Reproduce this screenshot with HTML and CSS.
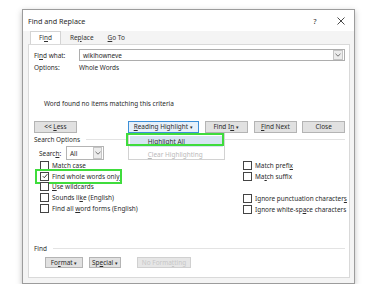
FILE: index.html
```html
<!DOCTYPE html>
<html lang="en">
<head>
    <meta charset="UTF-8">
    <meta name="viewport" content="width=device-width, initial-scale=1.0">
    <title>Find and Replace</title>
    <link rel="stylesheet" href="styles.css">
</head>
<body>
    <div class="dialog">
        <div class="titlebar">
            <span class="title">Find and Replace</span>
            <span class="help">?</span>
            <span class="close">
                <svg width="8" height="8" viewBox="0 0 8 8"><path d="M0.5 0.5L7.5 7.5M7.5 0.5L0.5 7.5" stroke="#333" stroke-width="0.9" fill="none"/></svg>
            </span>
        </div>

        <div class="tabs">
            <span class="tab active">Fi<u>n</u>d</span>
            <span class="tab">Re<u>p</u>lace</span>
            <span class="tab"><u>G</u>o To</span>
        </div>

        <div class="pane">
            <div class="field-row">
                <span class="field-label">Fi<u>n</u>d what:</span>
                <div class="combo">
                    <span class="combo-text">wikihowneve</span>
                    <span class="combo-btn">
                        <svg width="6" height="4" viewBox="0 0 6 4"><path d="M0.5 0.8L3 3.2L5.5 0.8" stroke="#555" stroke-width="0.8" fill="none"/></svg>
                    </span>
                </div>
            </div>
            <div class="options-row">
                <span class="field-label">Options:</span>
                <span>Whole Words</span>
            </div>

            <div class="message">Word found no items matching this criteria</div>

            <div class="button-row">
                <button class="btn btn-less">&lt;&lt; <u>L</u>ess</button>
                <div class="menu-wrap">
                    <button class="btn btn-reading"><u>R</u>eading Highlight <span class="caret">&#9662;</span></button>
                    <div class="menu">
                        <div class="menu-item selected"><u>H</u>ighlight All</div>
                        <div class="menu-item disabled"><u>C</u>lear Highlighting</div>
                    </div>
                    <div class="mark mark-menu"></div>
                </div>
                <button class="btn btn-findin">Find I<u>n</u> <span class="caret">&#9662;</span></button>
                <button class="btn btn-next"><u>F</u>ind Next</button>
                <button class="btn btn-close">Close</button>
            </div>

            <div class="group-head">
                <span>Search Options</span>
                <span class="rule"></span>
            </div>

            <div class="search-row">
                <span class="search-label">Searc<u>h</u>:</span>
                <div class="select">
                    <span class="select-text">All</span>
                    <span class="select-btn">
                        <svg width="6" height="4" viewBox="0 0 6 4"><path d="M0.5 0.8L3 3.2L5.5 0.8" stroke="#555" stroke-width="0.8" fill="none"/></svg>
                    </span>
                </div>
            </div>

            <div class="checks">
                <div class="check-col">
                    <div class="check"><span class="box"></span><span class="check-text">Matc<u>h</u> case</span></div>
                    <div class="check marked">
                        <span class="box">
                            <svg width="6" height="6" viewBox="0 0 6 6"><path d="M0.8 3.2L2.3 4.7L5.3 1.2" stroke="#222" stroke-width="0.9" fill="none"/></svg>
                        </span><span class="check-text">Find whole words onl<u>y</u></span>
                    </div>
                    <div class="check"><span class="box"></span><span class="check-text"><u>U</u>se wildcards</span></div>
                    <div class="check"><span class="box"></span><span class="check-text">Sounds li<u>k</u>e (English)</span></div>
                    <div class="check"><span class="box"></span><span class="check-text">Find all <u>w</u>ord forms (English)</span></div>
                </div>
                <div class="check-col">
                    <div class="check"><span class="box"></span><span class="check-text">Match prefi<u>x</u></span></div>
                    <div class="check"><span class="box"></span><span class="check-text">Ma<u>t</u>ch suffix</span></div>
                    <div class="check"></div>
                    <div class="check"><span class="box"></span><span class="check-text">Ignore punctuation character<u>s</u></span></div>
                    <div class="check"><span class="box"></span><span class="check-text">Ignore white-sp<u>a</u>ce characters</span></div>
                </div>
            </div>

            <div class="group-head find-head">
                <span>Find</span>
                <span class="rule"></span>
            </div>

            <div class="bottom-row">
                <button class="btn btn-format">Fo<u>r</u>mat <span class="caret">&#9662;</span></button>
                <button class="btn btn-special">Sp<u>e</u>cial <span class="caret">&#9662;</span></button>
                <button class="btn btn-noformat" disabled>No Forma<u>t</u>ting</button>
            </div>
        </div>
    </div>
</body>
</html>
```

FILE: styles.css
```css
body {
    margin: 0;
    padding: 0;
    background-color: #fff;
    font-family: "Noto Sans", "Open Sans", sans-serif;
    font-size: 6.45px;
    color: #2a2a2a;
}
u {
    text-decoration-thickness: 0.5px;
    text-underline-offset: 1px;
}
.dialog {
    width: 331px;
    height: 273px;
    margin: 9px 0 0 22px;
    border: 1px solid #9c9c9c;
    background-color: #f4f4f4;
    box-shadow: 0 2px 6px rgba(0, 0, 0, 0.25);
    display: flex;
    flex-direction: column;
}
.titlebar {
    height: 21px;
    display: flex;
    align-items: center;
    background-color: #fff;
    padding: 0 0 0 5px;
    font-size: 7.2px;
}
.title {
    flex: 1;
}
.help {
    width: 26px;
    text-align: center;
    font-size: 7.5px;
}
.close {
    width: 26px;
    display: flex;
    justify-content: center;
}
.tabs {
    height: 13px;
    display: flex;
    align-items: flex-end;
    padding-left: 7px;
}
.tab {
    height: 12px;
    line-height: 12px;
    padding: 0 7px;
    color: #333;
}
.tab.active {
    background-color: #fff;
    border: 1px solid #d4d4d4;
    border-bottom: none;
    padding: 0 8px;
    height: 12px;
    margin-right: 2px;
}
.pane {
    flex: 1;
    margin: 0 4px 5px 5px;
    background-color: #fff;
    border: 1px solid #d9d9d9;
    padding: 4px 4px 0 5px;
    display: flex;
    flex-direction: column;
}
.field-row {
    display: flex;
    align-items: center;
    height: 12px;
}
.field-label {
    width: 45px;
}
.combo {
    flex: 1;
    height: 12px;
    box-sizing: border-box;
    border: 1px solid #adadad;
    display: flex;
    align-items: center;
    padding-left: 3px;
}
.combo-text {
    flex: 1;
}
.combo-btn {
    width: 8px;
    height: 8px;
    margin-right: 1px;
    border: 1px solid #c5c5c5;
    background-color: #ececec;
    display: flex;
    align-items: center;
    justify-content: center;
}
.options-row {
    display: flex;
    align-items: center;
    height: 11px;
    margin-top: 1px;
}
.message {
    margin: 25px 0 0 10px;
    height: 11px;
    line-height: 11px;
}
.button-row {
    display: flex;
    margin-top: 12px;
    height: 12px;
}
.btn {
    font-family: inherit;
    font-size: 6.45px;
    color: #2a2a2a;
    height: 12px;
    padding: 0;
    background-color: #e1e1e1;
    border: 1px solid #b4b4b4;
    box-sizing: border-box;
    line-height: 10px;
    white-space: nowrap;
}
.caret {
    font-size: 5px;
}
.btn-less {
    width: 43px;
}
.menu-wrap {
    position: relative;
    margin-left: 51px;
}
.btn-reading {
    width: 71px;
    background-color: #e6f0fa;
    border-color: #3c8fd8;
}
.btn-findin {
    width: 43px;
    margin-left: 6px;
}
.btn-next {
    width: 44px;
    margin-left: 6px;
}
.btn-close {
    width: 43px;
    margin-left: 5px;
}
.menu {
    position: absolute;
    left: 0;
    top: 12px;
    width: 97px;
    height: 27px;
    box-sizing: border-box;
    background-color: #fff;
    border: 1px solid #d2d2d2;
    padding: 2px 1px;
    z-index: 2;
}
.menu-item {
    height: 11px;
    line-height: 11px;
    padding-left: 18px;
}
.menu-item.selected {
    background-color: #d6e4f2;
}
.menu-item.disabled {
    color: #b9b9b9;
    margin-top: 2px;
}
.mark {
    position: absolute;
    border: 2.5px solid #3fdc3c;
    z-index: 3;
}
.mark-menu {
    left: -2px;
    top: 12px;
    width: 94px;
    height: 9px;
}
.group-head {
    display: flex;
    align-items: center;
    height: 11px;
    margin-top: 1px;
}
.rule {
    flex: 1;
    height: 1px;
    background-color: #e3e3e3;
    margin-left: 6px;
}
.search-row {
    display: flex;
    align-items: center;
    height: 14px;
    margin: 1px 0 0 5px;
}
.search-label {
    width: 27px;
}
.select {
    width: 38px;
    height: 14px;
    box-sizing: border-box;
    border: 1px solid #b4b4b4;
    display: flex;
    align-items: center;
    padding-left: 3px;
}
.select-text {
    flex: 1;
}
.select-btn {
    width: 7px;
    height: 10px;
    margin-right: 1px;
    border: 1px solid #c5c5c5;
    background-color: #ececec;
    display: flex;
    align-items: center;
    justify-content: center;
}
.checks {
    display: grid;
    grid-template-columns: 203px 1fr;
    margin-top: 0;
    padding-left: 6px;
}
.check-col {
    display: flex;
    flex-direction: column;
}
.check {
    display: flex;
    align-items: center;
    height: 11px;
}
.check-text {
    white-space: nowrap;
}
.box {
    flex-shrink: 0;
    width: 7px;
    height: 7px;
    border: 1px solid #444;
    background-color: #fff;
    margin-right: 3px;
    display: flex;
    align-items: center;
    justify-content: center;
}
.check.marked {
    height: 8px;
    margin: -2.5px 0 -2.5px -5px;
    padding: 1.5px 0 1.5px 3px;
    border: 2.5px solid #3fdc3c;
    width: 80px;
}
.find-head {
    margin-top: 28px;
}
.bottom-row {
    display: flex;
    margin: 3px 0 0 11px;
}
.btn-format {
    width: 38px;
    height: 11px;
}
.btn-special {
    width: 32px;
    height: 11px;
    margin-left: 6px;
}
.btn-noformat {
    width: 54px;
    height: 11px;
    margin-left: 16px;
    color: #c7c7c7;
    background-color: #e6e6e6;
    border-color: #d0d0d0;
}
```
